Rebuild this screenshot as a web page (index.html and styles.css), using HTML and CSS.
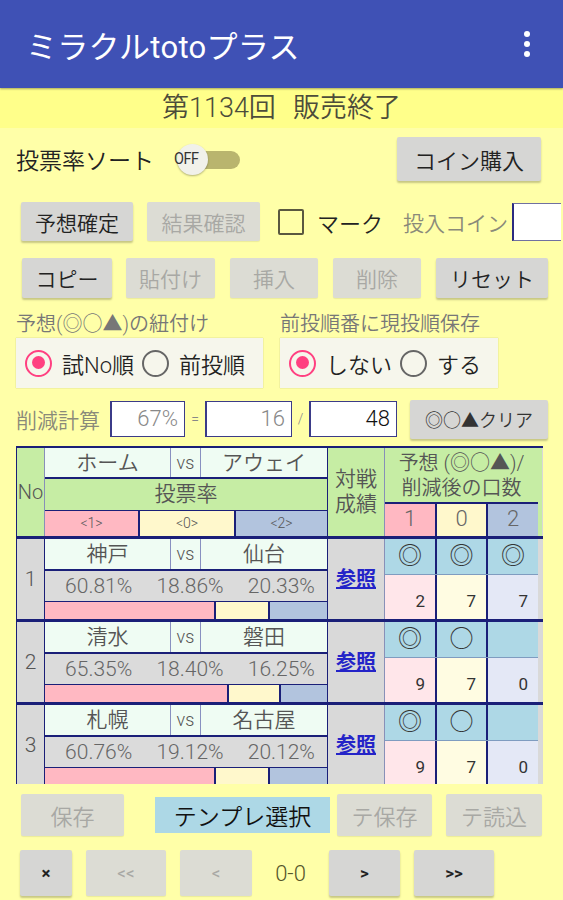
FILE: index.html
```html
<!DOCTYPE html>
<html lang="ja">
<head>
<meta charset="utf-8">
<title>ミラクルtotoプラス</title>
<link rel="stylesheet" href="styles.css">
</head>
<body>
<header class="appbar">
  <h1 class="title">ミラクルtotoプラス</h1>
  <svg class="overflow" width="8" height="28" viewBox="0 0 8 28" aria-hidden="true">
    <circle cx="4" cy="4" r="3"/><circle cx="4" cy="14" r="3"/><circle cx="4" cy="24" r="3"/>
  </svg>
</header>
<div class="band">第1134回&nbsp;&nbsp;販売終了</div>
<main class="content">
  <div class="row row-sort">
    <span class="sort-label">投票率ソート</span>
    <span class="switch"><span class="track"></span><span class="thumb"></span><span class="sw-text">OFF</span></span>
    <button class="btn btn-coin">コイン購入</button>
  </div>

  <div class="row row-fix">
    <button class="btn w112">予想確定</button>
    <button class="btn disabled w113 ml14">結果確認</button>
    <span class="check"><span class="box"></span><span class="check-text">マーク</span></span>
    <span class="coin-label">投入コイン</span>
    <span class="coin-input"></span>
  </div>

  <div class="row row-edit">
    <button class="btn w90">コピー</button>
    <button class="btn disabled w89 ml14">貼付け</button>
    <button class="btn disabled w88 ml15">挿入</button>
    <button class="btn disabled w88 ml15">削除</button>
    <button class="btn w112 ml15">リセット</button>
  </div>

  <div class="row row-opts">
    <div class="opt opt1">
      <div class="opt-label">予想(◎○▲)の紐付け</div>
      <div class="radio-box">
        <span class="radio on"></span><span class="radio-text">試No順</span>
        <span class="radio"></span><span class="radio-text">前投順</span>
      </div>
    </div>
    <div class="opt opt2">
      <div class="opt-label">前投順番に現投順保存</div>
      <div class="radio-box">
        <span class="radio on"></span><span class="radio-text">しない</span>
        <span class="radio"></span><span class="radio-text">する</span>
      </div>
    </div>
  </div>

  <div class="row row-calc">
    <span class="calc-label">削減計算</span>
    <span class="field f1 muted">67%</span>
    <span class="op">=</span>
    <span class="field f2 muted">16</span>
    <span class="op op2">/</span>
    <span class="field f3">48</span>
    <button class="btn btn-clear">◎○▲クリア</button>
  </div>

  <div class="tbl">
    <div class="trow thead">
      <div class="c-no green">No</div>
      <div class="c-teams">
        <div class="names hnames">
          <span class="n-home">ホーム</span><span class="n-vs">vs</span><span class="n-away">アウェイ</span>
        </div>
        <div class="h-rate">投票率</div>
        <div class="h-marks">
          <span class="m1">&lt;1&gt;</span><span class="m0">&lt;0&gt;</span><span class="m2">&lt;2&gt;</span>
        </div>
      </div>
      <div class="c-rec green">対戦<br>成績</div>
      <div class="c-pred">
        <div class="p-title">予想 (◎○▲)/<br>削減後の口数</div>
        <div class="p-cols"><span class="pc1">1</span><span class="pc0">0</span><span class="pc2">2</span></div>
      </div>
      <div class="c-pad green"></div>
    </div>

    <div class="trow">
      <div class="c-no grey">1</div>
      <div class="c-teams">
        <div class="names"><span class="n-home">神戸</span><span class="n-vs">vs</span><span class="n-away">仙台</span></div>
        <div class="pcts"><span>60.81%</span><span>18.86%</span><span>20.33%</span></div>
        <div class="bars"><span class="b1" style="width:60.81%"></span><span class="b0" style="width:18.86%"></span><span class="b2"></span></div>
      </div>
      <div class="c-rec grey"><a class="ref">参照</a></div>
      <div class="c-pred">
        <div class="p-sym"><span>◎</span><span>◎</span><span>◎</span></div>
        <div class="p-num"><span class="pn1">2</span><span class="pn0">7</span><span class="pn2">7</span></div>
      </div>
      <div class="c-pad grey"></div>
    </div>

    <div class="trow">
      <div class="c-no grey">2</div>
      <div class="c-teams">
        <div class="names"><span class="n-home">清水</span><span class="n-vs">vs</span><span class="n-away">磐田</span></div>
        <div class="pcts"><span>65.35%</span><span>18.40%</span><span>16.25%</span></div>
        <div class="bars"><span class="b1" style="width:65.35%"></span><span class="b0" style="width:18.40%"></span><span class="b2"></span></div>
      </div>
      <div class="c-rec grey"><a class="ref">参照</a></div>
      <div class="c-pred">
        <div class="p-sym"><span>◎</span><span>○</span><span></span></div>
        <div class="p-num"><span class="pn1">9</span><span class="pn0">7</span><span class="pn2">0</span></div>
      </div>
      <div class="c-pad grey"></div>
    </div>

    <div class="trow">
      <div class="c-no grey">3</div>
      <div class="c-teams">
        <div class="names"><span class="n-home">札幌</span><span class="n-vs">vs</span><span class="n-away">名古屋</span></div>
        <div class="pcts"><span>60.76%</span><span>19.12%</span><span>20.12%</span></div>
        <div class="bars"><span class="b1" style="width:60.76%"></span><span class="b0" style="width:19.12%"></span><span class="b2"></span></div>
      </div>
      <div class="c-rec grey"><a class="ref">参照</a></div>
      <div class="c-pred">
        <div class="p-sym"><span>◎</span><span>○</span><span></span></div>
        <div class="p-num"><span class="pn1">9</span><span class="pn0">7</span><span class="pn2">0</span></div>
      </div>
      <div class="c-pad grey"></div>
    </div>
  </div>

  <div class="row row-tpl">
    <button class="btn disabled w103">保存</button>
    <button class="btn-tpl">テンプレ選択</button>
    <button class="btn disabled w95 ml7">テ保存</button>
    <button class="btn disabled w96 ml14">テ読込</button>
  </div>

  <div class="row row-nav">
    <button class="btn nav w52">×</button>
    <button class="btn nav disabled w80 ml14">&lt;&lt;</button>
    <button class="btn nav disabled w72 ml14">&lt;</button>
    <span class="count">0-0</span>
    <button class="btn nav w71">&gt;</button>
    <button class="btn nav w80 ml14">&gt;&gt;</button>
  </div>
</main>
</body>
</html>
```

FILE: styles.css
```css
* { box-sizing: border-box; }
html, body { margin: 0; padding: 0; }
body {
  width: 563px;
  height: 900px;
  overflow: hidden;
  background: #FFFFA8;
  font-family: Roboto, "Noto Sans CJK JP", sans-serif;
  font-weight: 350;
  color: #222;
}
button { font-family: inherit; font-weight: 350; }

.appbar {
  height: 88px;
  background: #3F51B5;
  display: flex;
  align-items: center;
  justify-content: space-between;
  padding: 0 32px 0 26px;
  box-shadow: 0 1px 2px rgba(0,0,0,0.35);
  position: relative;
}
.title {
  margin: 0;
  font-size: 31px;
  font-weight: 400;
  color: #fff;
  letter-spacing: 0.3px;
}
.overflow { fill: #fff; }

.band {
  height: 40px;
  background: #FFFF8A;
  text-align: center;
  font-size: 27px;
  line-height: 40px;
  color: #4c4c3a;
  word-spacing: 2px;
}

.content { padding: 0; }
.row { display: flex; align-items: center; }

/* generic button */
.btn {
  height: 40px;
  border: none;
  border-radius: 2px;
  background: #D6D6D4;
  box-shadow: 0 2px 2px rgba(0,0,0,0.22);
  font-size: 21px;
  color: #222;
  padding: 0;
  text-align: center;
}
.btn.disabled {
  background: #DCDCD4;
  color: #A8A8A4;
  box-shadow: 0 1px 1px rgba(0,0,0,0.08);
}
.w52 { width: 52px; } .w71 { width: 71px; } .w72 { width: 72px; } .w80 { width: 80px; }
.w88 { width: 88px; } .w89 { width: 89px; } .w90 { width: 90px; } .w95 { width: 95px; }
.w96 { width: 96px; } .w103 { width: 103px; } .w112 { width: 112px; } .w113 { width: 113px; }
.ml7 { margin-left: 7px; } .ml14 { margin-left: 14px; } .ml15 { margin-left: 15px; }

/* row 1 */
.row-sort { margin-top: 9px; height: 44px; padding-left: 16px; }
.sort-label { font-size: 23px; color: #222; }
.switch {
  position: relative;
  width: 66px;
  height: 32px;
  margin-left: 22px;
}
.track {
  position: absolute;
  left: 14px; top: 8px;
  width: 50px; height: 18px;
  border-radius: 9px;
  background: #B9B56E;
}
.thumb {
  position: absolute;
  left: 1px; top: 1px;
  width: 31px; height: 31px;
  border-radius: 50%;
  background: #F1F1EA;
  box-shadow: 0 1px 2px rgba(0,0,0,0.3);
}
.sw-text {
  position: absolute;
  left: -2px; top: 5px;
  font-size: 17px;
  font-weight: 400;
  color: #333;
  letter-spacing: -0.5px;
  transform: scaleX(0.85);
  transform-origin: left center;
}
.btn-coin { width: 144px; height: 44px; margin-left: auto; margin-right: 22px; font-size: 22px; }

/* row 2 */
.row-fix { margin-top: 21px; height: 39px; padding-left: 21px; }
.row-fix .btn { height: 39px; }
.check { display: flex; align-items: center; margin-left: 18px; }
.box {
  width: 26px; height: 26px;
  border: 2.5px solid #5a5840;
  border-radius: 2px;
}
.check-text { margin-left: 13px; font-size: 22px; color: #222; }
.coin-label { margin-left: 20px; font-size: 21px; color: #8a8a7a; }
.coin-input {
  width: 49px; height: 38px;
  margin-left: 4px;
  background: #fff;
  border-left: 2px solid #2b2b80;
  border-top: 1px solid #7070a0;
  border-bottom: 1px solid #7070a0;
}

/* row 3 */
.row-edit { margin-top: 17px; height: 40px; padding-left: 22px; }

/* options */
.row-opts { margin-top: 14px; align-items: flex-start; padding-left: 16px; }
.opt-label { font-size: 20px; color: #777; line-height: 24px; height: 26px; }
.opt2 { margin-left: 17px; }
.radio-box {
  display: flex;
  align-items: center;
  height: 50px;
  background: #F6F6EC;
  box-shadow: 0 0 1px rgba(0,0,0,0.3);
  padding: 0 8px 0 9px;
}
.opt1 .radio-box { width: 247px; }
.opt2 .radio-box { width: 218px; }
.radio {
  width: 27px; height: 27px;
  border-radius: 50%;
  border: 2.5px solid #666;
  flex: none;
  position: relative;
}
.radio.on { border-color: #FF4081; }
.radio.on::after {
  content: "";
  position: absolute;
  left: 4.5px; top: 4.5px;
  width: 13px; height: 13px;
  border-radius: 50%;
  background: #FF4081;
}
.radio-text { font-size: 22px; color: #222; margin: 0 8px 0 10px; }

/* calc row */
.row-calc { margin-top: 12px; height: 38px; padding-left: 16px; }
.calc-label { font-size: 21px; color: #8a8a7a; }
.field {
  height: 36px;
  background: #fff;
  border: 1px solid #3b3b88;
  border-left-width: 2px;
  font-size: 22px;
  line-height: 34px;
  text-align: right;
  padding-right: 6px;
  color: #111;
}
.field.muted { color: #888; }
.f1 { width: 75px; margin-left: 10px; }
.f2 { width: 87px; }
.f3 { width: 88px; }
.op { font-size: 14px; color: #888; width: 20px; text-align: center; }
.op2 { width: 17px; }
.btn-clear { width: 138px; height: 39px; margin-left: 13px; font-size: 18px; color: #333; }

/* table */
.tbl {
  margin: 8px 0 0 16px;
  width: 527px;
  height: 338px;
  overflow: hidden;
  border-top: 2px solid #1a1f78;
  border-left: 1px solid #1a1f78;
  background: #D8D8D8;
}
.trow {
  display: flex;
  height: 83px;
  border-bottom: 3px solid #1a1f78;
  color: #555;
}
.thead { height: 91px; }
.green { background: #C6EDA4; }
.grey { background: #D9D9D9; }
.c-no {
  width: 28px;
  border-right: 1px solid #1a1f78;
  display: flex;
  align-items: center;
  justify-content: center;
  font-size: 21px;
}
.thead .c-no { border-right-color: #8890b8; font-size: 20px; }
.c-teams {
  width: 283px;
  border-right: 1px solid #1a1f78;
  display: flex;
  flex-direction: column;
}
.names {
  height: 32px;
  display: flex;
  background: #EFFCF3;
  border-bottom: 2px solid #1a1f78;
  font-size: 21px;
  line-height: 30px;
}
.hnames { height: 31px; }
.names span { text-align: center; }
.n-home { width: 126px; border-right: 1px solid #8890c0; }
.n-vs { width: 30px; border-right: 1px solid #8890c0; font-size: 18px; }
.n-away { flex: 1; }
.h-rate {
  height: 32px;
  background: #C6EDA4;
  border-bottom: 1px solid #1a1f78;
  text-align: center;
  font-size: 21px;
  line-height: 31px;
}
.h-marks { flex: 1; display: flex; font-size: 14px; line-height: 25px; }
.h-marks span { text-align: center; }
.m1 { width: 95px; background: #FFB8C2; border-right: 2px solid #1a1f78; }
.m0 { width: 96px; background: #FFF8CC; border-right: 2px solid #1a1f78; }
.m2 { flex: 1; background: #B2C4DE; }
.c-rec {
  width: 57px;
  border-right: 1px solid #8890b8;
  display: flex;
  align-items: center;
  justify-content: center;
  text-align: center;
  font-size: 21px;
  line-height: 25px;
}
.c-pred { width: 153px; display: flex; flex-direction: column; }
.p-title {
  height: 56px;
  background: #C6EDA4;
  border-bottom: 2px solid #1a1f78;
  text-align: center;
  font-size: 20px;
  line-height: 25px;
  padding-top: 3px;
}
.p-cols { flex: 1; display: flex; font-size: 22px; line-height: 30px; color: #666; }
.p-cols span, .p-sym span { text-align: center; }
.pc1, .p-sym span:nth-child(1), .pn1 { width: 52px; border-right: 2px solid #1a1f78; }
.pc0, .p-sym span:nth-child(2), .pn0 { width: 51px; border-right: 2px solid #1a1f78; }
.pc2, .p-sym span:nth-child(3), .pn2 { flex: 1; }
.pc1 { background: #FFB8C2; }
.pc0 { background: #FFF8CC; }
.pc2 { background: #B2C4DE; }
.c-pad { width: 4px; }

.pcts {
  height: 31px;
  display: flex;
  border-bottom: 1px solid #1a1f78;
  background: #DBDBDB;
  font-size: 21px;
  line-height: 31px;
  color: #666;
}
.pcts span { flex: 1; text-align: center; }
.pcts span:first-child { padding-left: 8px; }
.bars { flex: 1; display: flex; }
.bars span { height: 100%; }
.b1 { background: #FFB8C2; border-right: 2px solid #1a1f78; }
.b0 { background: #FFF8CC; border-right: 2px solid #1a1f78; }
.b2 { flex: 1; background: #B2C4DE; }

.ref {
  color: #2424c8;
  font-weight: 700;
  text-decoration: underline;
  font-size: 20px;
}
.p-sym {
  height: 36px;
  display: flex;
  background: #AED8E6;
  border-bottom: 1px solid #7f9cc0;
  font-size: 24px;
  line-height: 34px;
  color: #333;
}
.p-num { flex: 1; display: flex; font-size: 17px; color: #333; font-weight: 400; }
.p-num span {
  display: flex;
  align-items: flex-end;
  justify-content: flex-end;
  padding: 0 10px 8px 0;
}
.pn1 { background: #FFE6EA; }
.pn0 { background: #FFFCE2; }
.pn2 { background: #E4E8F6; }

/* bottom */
.row-tpl { margin-top: 10px; height: 42px; padding-left: 21px; }
.row-tpl .btn { height: 42px; font-size: 22px; }
.btn-tpl {
  width: 175px;
  height: 36px;
  margin-left: 31px;
  border: none;
  background: #ADD8E6;
  font-size: 23px;
  color: #111;
  padding: 0;
}
.row-nav { margin-top: 14px; height: 46px; padding-left: 20px; }
.nav { height: 46px; font-size: 17px; font-weight: 700; }
.nav.disabled { font-weight: 400; }
.count { width: 77px; text-align: center; font-size: 22px; color: #55552a; }
```
